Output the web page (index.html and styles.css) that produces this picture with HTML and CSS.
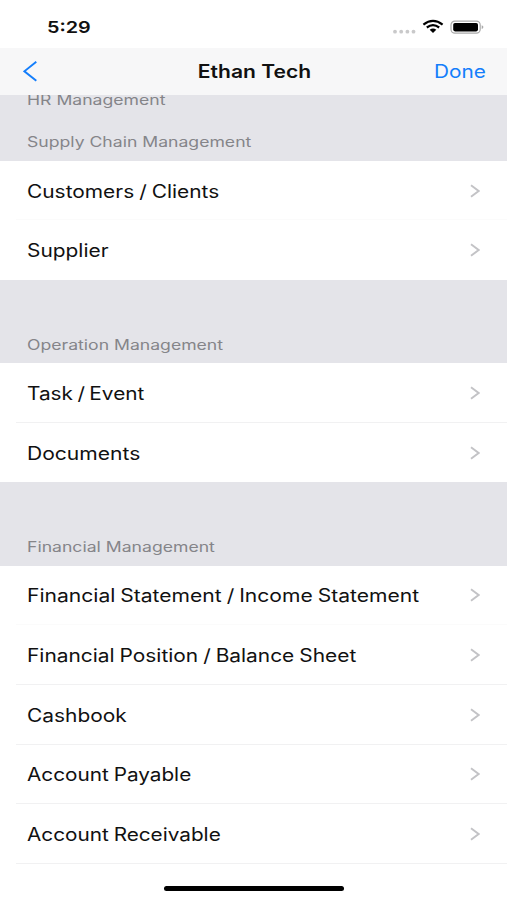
FILE: index.html
```html
<!DOCTYPE html>
<html lang="en">
<head>
<meta charset="utf-8">
<title>Ethan Tech</title>
<link rel="stylesheet" href="styles.css">
</head>
<body>
<svg class="defs" aria-hidden="true"><symbol id="chevron" viewBox="0 0 10 14"><path d="M1 1.2 8.6 7 1 12.8"/></symbol></svg>
<div class="screen">
  <header class="status">
    <span class="time">5:29</span>
    <svg class="indicators" viewBox="0 0 94 20" aria-hidden="true">
      <g fill="#c9c9ca"><circle cx="5" cy="13.7" r="1.9"/><circle cx="11.2" cy="13.7" r="1.9"/><circle cx="17.4" cy="13.7" r="1.9"/><circle cx="23.5" cy="13.7" r="1.9"/></g>
      <g fill="none" stroke="#000" stroke-width="2.2"><path d="M33.4 6.6Q43 -.7 52.6 6.6"/><path d="M36.8 9.5Q43 4.9 49.2 9.5"/></g>
      <path d="M39.7 11.7Q43 9.4 46.3 11.7L43 15Z"/>
      <rect x="61" y="3.1" width="29.2" height="12" rx="3.8" fill="#fff" stroke="#aaa" stroke-width="1.2"/>
      <rect x="63.2" y="4.9" width="24.8" height="8.5" rx="1.8"/>
      <path d="M91.7 7.2Q93.4 7.8 93.4 9.1T91.7 11Z" fill="#aaa"/>
    </svg>
  </header>
  <nav class="nav">
    <svg class="back" viewBox="0 0 15 22" aria-label="Back"><path d="M13.3 1.8 1.4 11.3 13.3 20.8"/></svg>
    <h1 class="title">Ethan Tech</h1>
    <span class="done">Done</span>
  </nav>
  <main class="content">
    <h2 class="heading clipped"><span>HR Management</span></h2>
    <h2 class="heading short"><span>Supply Chain Management</span></h2>
    <ul class="list">
      <li class="row faint"><span>Customers / Clients</span><svg class="chevron"><use href="#chevron"/></svg></li>
      <li class="row"><span>Supplier</span><svg class="chevron"><use href="#chevron"/></svg></li>
    </ul>
    <h2 class="heading"><span>Operation Management</span></h2>
    <ul class="list">
      <li class="row"><span class="tight">Task / Event</span><svg class="chevron"><use href="#chevron"/></svg></li>
      <li class="row"><span class="wide">Documents</span><svg class="chevron"><use href="#chevron"/></svg></li>
    </ul>
    <h2 class="heading"><span>Financial Management</span></h2>
    <ul class="list last">
      <li class="row faint"><span class="wide">Financial Statement / Income Statement</span><svg class="chevron"><use href="#chevron"/></svg></li>
      <li class="row"><span>Financial Position / Balance Sheet</span><svg class="chevron"><use href="#chevron"/></svg></li>
      <li class="row"><span>Cashbook</span><svg class="chevron"><use href="#chevron"/></svg></li>
      <li class="row"><span class="snug">Account Payable</span><svg class="chevron"><use href="#chevron"/></svg></li>
      <li class="row"><span class="snug">Account Receivable</span><svg class="chevron"><use href="#chevron"/></svg></li>
    </ul>
  </main>
  <div class="home"></div>
</div>
</body>
</html>
```
FILE: styles.css
```css
* { box-sizing: border-box; }
body { margin: 0; background: #fff; font-family: Inter, "Liberation Sans", sans-serif; color: #111; }
h1, h2, ul { margin: 0; padding: 0; }
.defs { position: absolute; width: 0; height: 0; }
.screen { position: relative; display: flex; flex-direction: column; width: 507px; height: 900px; overflow: hidden; }
.status { flex: none; display: flex; justify-content: space-between; height: 48px; padding: 18px 23px 0 47px; }
.time { font-size: 16.5px; line-height: 19px; font-weight: 600; transform: scaleX(1.2); transform-origin: left; }
.indicators { width: 94px; height: 20px; }
.nav { flex: none; display: grid; grid-template-columns: 1fr auto 1fr; align-items: center; height: 46.6px; padding: 0 21px 0 23px; background: #f7f7f8; }
.back { width: 15px; height: 22px; fill: none; stroke: #147efb; stroke-width: 1.9; }
.title { margin-top: 2px; font-size: 18px; line-height: 24px; font-weight: 600; transform: scaleX(1.17); }
.done { margin-top: 2px; justify-self: end; font-size: 18px; line-height: 24px; color: #147efb; transform: scaleX(1.155); transform-origin: right; }
.content { flex: 1; overflow: hidden; background: #e4e4e9; }
.heading { display: flex; align-items: flex-end; height: 83.2px; padding: 0 27px 9.6px; font-size: 14px; line-height: 18px; font-weight: 400; color: #858589; }
.heading span, .row span { transform: scaleX(1.258); transform-origin: left; white-space: nowrap; }
.clipped { height: 23px; padding-bottom: 8.6px; }
.short { height: 43.1px; }
.list { list-style: none; background: #fff; }
.row { position: relative; display: flex; align-items: center; justify-content: space-between; height: 59.65px; padding: 0 27px 0 27px; font-size: 18px; line-height: 24px; }
.row span { margin-top: 2px; transform: scaleX(1.161); word-spacing: -.8px; }
.row .wide { transform: scaleX(1.17); }
.row .snug { transform: scaleX(1.152); }
.row .tight { transform: scaleX(1.155); word-spacing: -1.2px; }
.row:not(:last-child)::after, .last .row::after { content: ""; position: absolute; left: 16px; right: 0; bottom: 0; height: 1px; background: #f1f1f2; }
.row.faint::after { opacity: .3; }
.chevron { width: 10px; height: 14px; fill: none; stroke: #c3c3c6; stroke-width: 1.9; }
.last { height: 340px; }
.home { position: absolute; left: 164px; bottom: 8.7px; width: 180px; height: 5.4px; border-radius: 3px; background: #000; }
```
